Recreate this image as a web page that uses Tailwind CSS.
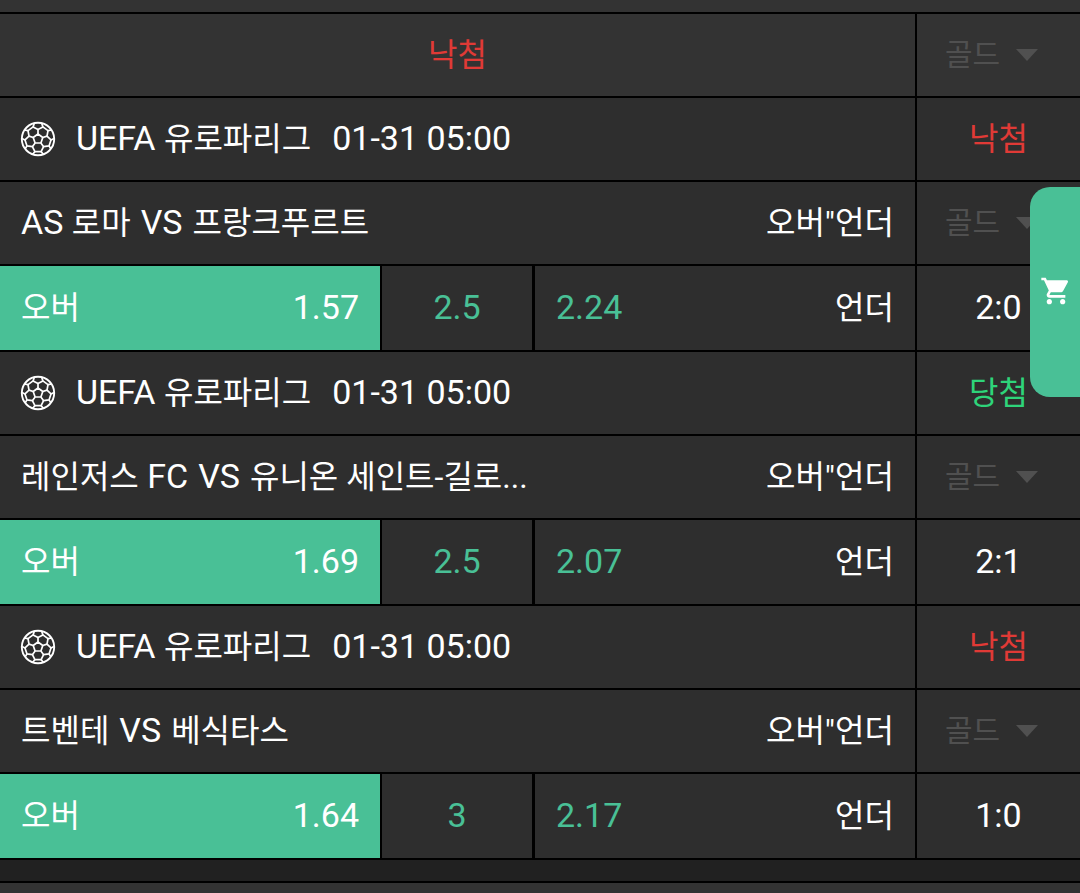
<!DOCTYPE html>
<html lang="ko">

<head>
    <meta charset="UTF-8">
    <meta name="viewport" content="width=device-width, initial-scale=1.0">
    <title>배팅내역</title>
    <script src="https://cdn.jsdelivr.net/npm/@tailwindcss/browser@4"></script>
</head>

<body class="min-h-screen bg-[#333333] pt-3 font-[Roboto,'Noto_Sans_CJK_KR',sans-serif] text-[34px] leading-10 text-white">

    <!-- shared icons -->
    <svg class="hidden">
        <symbol id="ball" viewBox="0 0 36 36">
            <g fill="none" stroke="currentColor" stroke-width="1.7" stroke-linejoin="round">
                <circle cx="18" cy="18" r="16.2" stroke-width="1.9" />
                <path d="M18 13L22.8 16.5L20.9 22H15.1L13.2 16.5Z" />
                <path d="M18 13V8.5M22.8 16.5L27 15.1M20.9 22L23.6 25.7M15.1 22L12.4 25.7M13.2 16.5L9 15.1" />
                <path d="M18 8.5L22.9 5.9L28 9.6L27 15.1L31 18.9L29 24.9L23.6 25.7L21.1 30.6H14.9L12.4 25.7L7 24.9L5 18.9L9 15.1L8 9.6L13.1 5.9Z" />
                <path d="M22.9 5.9L21.6 2M28 9.6L31.8 9M31 18.9L34 17.5M29 24.9L31 28M21.1 30.6L23.5 33.5M14.9 30.6L12.5 33.5M7 24.9L5 28M5 18.9L2 17.5M8 9.6L4.2 9M13.1 5.9L14.4 2" />
            </g>
        </symbol>
        <symbol id="arrow" viewBox="0 0 22 12">
            <path d="M0 0H22L11 12Z" fill="currentColor" />
        </symbol>
    </svg>

    <main class="border-t-2 border-black bg-[#2e2e2e]">

        <!-- slip header -->
        <div class="flex h-[84px] border-b-2 border-black bg-[#333333]">
            <div class="flex flex-1 items-center justify-center text-[32px] text-[#e03a36]">낙첨</div>
            <div class="relative flex w-[165px] items-center border-l-2 border-black text-[#505050]">
                <select disabled aria-label="구분" class="h-full w-full appearance-none pl-7 text-[30px] opacity-100">
                    <option>골드</option>
                </select>
                <svg class="pointer-events-none absolute right-[42px] h-3 w-[22px]"><use href="#arrow" /></svg>
            </div>
        </div>

        <!-- match 1 -->
        <section>
            <div class="flex h-[84px] border-b-2 border-black">
                <div class="flex flex-1 items-center pl-5">
                    <svg class="mr-5 size-9"><use href="#ball" /></svg>
                    <span class="pb-0.5">UEFA <span class="text-[32px]">유로파리그</span></span>
                    <time class="ml-[21px] pb-0.5">01-31 05:00</time>
                </div>
                <div class="flex w-[165px] items-center justify-center border-l-2 border-black text-[32px] text-[#e03a36]">낙첨</div>
            </div>
            <div class="flex h-[84px] border-b-2 border-black">
                <div class="flex flex-1 items-center justify-between px-[21px]">
                    <div class="flex items-baseline gap-2.5 pb-0.5">
                        <span>AS <span class="text-[32px]">로마</span></span>
                        <span>VS</span>
                        <span class="text-[32px]">프랑크푸르트</span>
                    </div>
                    <span class="text-[32px]">오버"언더</span>
                </div>
                <div class="relative flex w-[165px] items-center border-l-2 border-black text-[#505050]">
                    <select disabled aria-label="구분" class="h-full w-full appearance-none pl-7 text-[30px] opacity-100">
                        <option>골드</option>
                    </select>
                    <svg class="pointer-events-none absolute right-[42px] h-3 w-[22px]"><use href="#arrow" /></svg>
                </div>
            </div>
            <div class="flex h-[86px] border-b-2 border-black">
                <div class="grid flex-1 grid-cols-[380fr_155fr_380fr]">
                    <button class="flex items-center justify-between bg-[#49c096] px-[21px]">
                        <span class="text-[32px]">오버</span>
                        <span class="pb-0.5">1.57</span>
                    </button>
                    <div class="flex items-center justify-center border-r-3 border-l-2 border-black pb-0.5 text-[#49c096]">2.5</div>
                    <button class="flex items-center justify-between px-[21px]">
                        <span class="pb-0.5 text-[#49c096]">2.24</span>
                        <span class="text-[32px]">언더</span>
                    </button>
                </div>
                <div class="flex w-[165px] items-center justify-center border-l-2 border-black pb-0.5">2:0</div>
            </div>
        </section>

        <!-- match 2 -->
        <section>
            <div class="flex h-[84px] border-b-2 border-black">
                <div class="flex flex-1 items-center pl-5">
                    <svg class="mr-5 size-9"><use href="#ball" /></svg>
                    <span class="pb-0.5">UEFA <span class="text-[32px]">유로파리그</span></span>
                    <time class="ml-[21px] pb-0.5">01-31 05:00</time>
                </div>
                <div class="flex w-[165px] items-center justify-center border-l-2 border-black text-[32px] text-[#2ed47a]">당첨</div>
            </div>
            <div class="flex h-[84px] border-b-2 border-black">
                <div class="flex flex-1 items-center justify-between px-[21px]">
                    <div class="flex items-baseline gap-2.5 pb-0.5">
                        <span><span class="text-[32px]">레인저스</span> FC</span>
                        <span>VS</span>
                        <span class="text-[32px]">유니온 세인트-길로...</span>
                    </div>
                    <span class="text-[32px]">오버"언더</span>
                </div>
                <div class="relative flex w-[165px] items-center border-l-2 border-black text-[#505050]">
                    <select disabled aria-label="구분" class="h-full w-full appearance-none pl-7 text-[30px] opacity-100">
                        <option>골드</option>
                    </select>
                    <svg class="pointer-events-none absolute right-[42px] h-3 w-[22px]"><use href="#arrow" /></svg>
                </div>
            </div>
            <div class="flex h-[86px] border-b-2 border-black">
                <div class="grid flex-1 grid-cols-[380fr_155fr_380fr]">
                    <button class="flex items-center justify-between bg-[#49c096] px-[21px]">
                        <span class="text-[32px]">오버</span>
                        <span class="pb-0.5">1.69</span>
                    </button>
                    <div class="flex items-center justify-center border-r-3 border-l-2 border-black pb-0.5 text-[#49c096]">2.5</div>
                    <button class="flex items-center justify-between px-[21px]">
                        <span class="pb-0.5 text-[#49c096]">2.07</span>
                        <span class="text-[32px]">언더</span>
                    </button>
                </div>
                <div class="flex w-[165px] items-center justify-center border-l-2 border-black pb-0.5">2:1</div>
            </div>
        </section>

        <!-- match 3 -->
        <section>
            <div class="flex h-[84px] border-b-2 border-black">
                <div class="flex flex-1 items-center pl-5">
                    <svg class="mr-5 size-9"><use href="#ball" /></svg>
                    <span class="pb-0.5">UEFA <span class="text-[32px]">유로파리그</span></span>
                    <time class="ml-[21px] pb-0.5">01-31 05:00</time>
                </div>
                <div class="flex w-[165px] items-center justify-center border-l-2 border-black text-[32px] text-[#e03a36]">낙첨</div>
            </div>
            <div class="flex h-[84px] border-b-2 border-black">
                <div class="flex flex-1 items-center justify-between px-[21px]">
                    <div class="flex items-baseline gap-2.5 pb-0.5">
                        <span class="text-[32px]">트벤테</span>
                        <span>VS</span>
                        <span class="text-[32px]">베식타스</span>
                    </div>
                    <span class="text-[32px]">오버"언더</span>
                </div>
                <div class="relative flex w-[165px] items-center border-l-2 border-black text-[#505050]">
                    <select disabled aria-label="구분" class="h-full w-full appearance-none pl-7 text-[30px] opacity-100">
                        <option>골드</option>
                    </select>
                    <svg class="pointer-events-none absolute right-[42px] h-3 w-[22px]"><use href="#arrow" /></svg>
                </div>
            </div>
            <div class="flex h-[86px] border-b-2 border-black">
                <div class="grid flex-1 grid-cols-[380fr_155fr_380fr]">
                    <button class="flex items-center justify-between bg-[#49c096] px-[21px]">
                        <span class="text-[32px]">오버</span>
                        <span class="pb-0.5">1.64</span>
                    </button>
                    <div class="flex items-center justify-center border-r-3 border-l-2 border-black pb-0.5 text-[#49c096]">3</div>
                    <button class="flex items-center justify-between px-[21px]">
                        <span class="pb-0.5 text-[#49c096]">2.17</span>
                        <span class="text-[32px]">언더</span>
                    </button>
                </div>
                <div class="flex w-[165px] items-center justify-center border-l-2 border-black pb-0.5">1:0</div>
            </div>
        </section>

        <div class="h-[23px] border-b-2 border-black bg-[#212121]"></div>
    </main>

    <!-- floating cart -->
    <button aria-label="장바구니" class="fixed top-[187px] right-0 flex h-[210px] w-[50px] items-center justify-center rounded-l-[20px] bg-[#49c096] pb-0.5 pl-0.5">
        <svg class="size-8" viewBox="0 0 24 24" fill="currentColor">
            <path d="M7 18c-1.1 0-1.99.9-1.99 2S5.9 22 7 22s2-.9 2-2-.9-2-2-2zM1 2v2h2l3.600 7.590-1.350 2.450c-.16.28-.25.61-.25.96 0 1.100.900 2 2 2h12v-2H7.420c-.14 0-.25-.11-.25-.25l.03-.12.900-1.630h7.450c.75 0 1.410-.41 1.750-1.030l3.580-6.490c.08-.14.12-.31.12-.48 0-.55-.45-1-1-1H5.210l-.94-2H1zm16 16c-1.100 0-1.990.900-1.990 2s.89 2 1.990 2 2-.900 2-2-.900-2-2-2z" />
        </svg>
    </button>
</body>

</html>
